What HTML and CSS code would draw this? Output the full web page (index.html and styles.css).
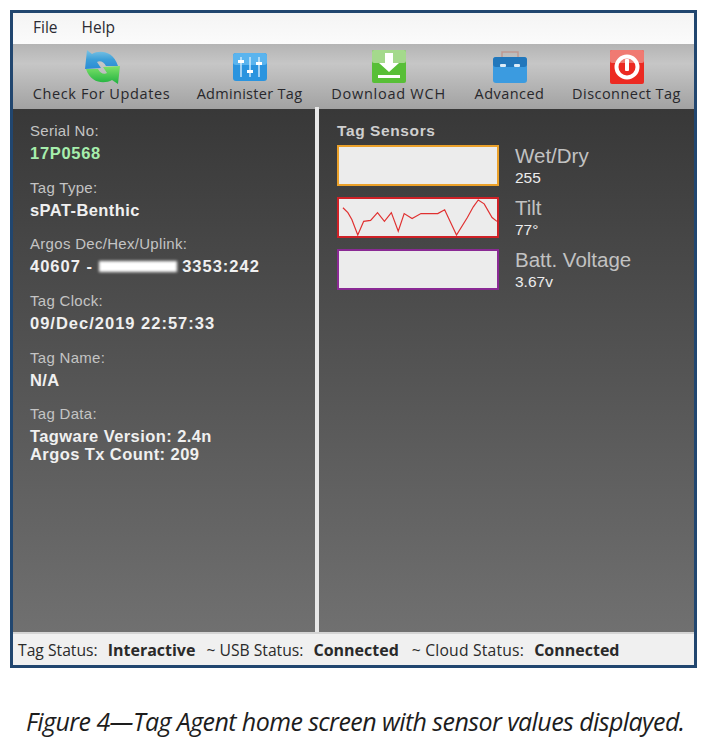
FILE: index.html
```html
<!DOCTYPE html>
<html lang="en">
<head>
<meta charset="utf-8">
<title>Tag Agent</title>
<link rel="stylesheet" href="styles.css">
</head>
<body>
<div class="window">
  <div class="menubar"><span>File</span><span>Help</span></div>
  <div class="toolbar">
    <div class="tool tool-updates">
      <svg class="icon" viewBox="0 0 36 36">
        <defs>
          <linearGradient id="syncblue" x1="0" y1="0" x2="0" y2="1"><stop offset="0" stop-color="#7cc4e4"/><stop offset="0.5" stop-color="#3d9fd8"/><stop offset="1" stop-color="#2a8bd6"/></linearGradient>
          <linearGradient id="syncgreen" x1="0" y1="0" x2="0" y2="1"><stop offset="0" stop-color="#7fe36a"/><stop offset="1" stop-color="#1fb13f"/></linearGradient>
        </defs>
        <path d="M3 1l5 4c7-4 21-4 26 12H22c-2-4-6-6-9-4l4 6-16 1z" fill="url(#syncblue)"/>
        <path d="M34 35l-6-4c-7 4-21 4-26-11h12c2 4 6 6 9 4l-4-6 17-1z" fill="url(#syncgreen)"/>
      </svg>
      <span>Check For Updates</span>
    </div>
    <div class="tool tool-admin">
      <svg class="icon" viewBox="0 0 36 36"><rect x="1" y="4" width="34" height="28" rx="3" fill="#2a94df"/><rect x="1" y="4" width="34" height="12" rx="3" fill="#5ab4ee"/><path d="M9 8v20M18 8v20M27 8v20" stroke="#d5ecfb" stroke-width="1.4"/><path d="M6 11h6v3H6zM15 21h6v3h-6zM24 13h6v3h-6z" fill="#fff"/></svg>
      <span>Administer Tag</span>
    </div>
    <div class="tool tool-download">
      <svg class="icon" viewBox="0 0 36 36"><rect x="1" y="1" width="34" height="33" rx="2" fill="#58bf37"/><rect x="1" y="1" width="34" height="13" rx="2" fill="#a4d98c"/><path d="M14 4h8v10h6L18 23 8 14h6z" fill="#fff"/><rect x="7" y="26" width="22" height="3" fill="#fff"/></svg>
      <span>Download WCH</span>
    </div>
    <div class="tool tool-advanced">
      <svg class="icon" viewBox="0 0 36 36"><path d="M10 8V3h16v5" fill="none" stroke="#c09a92" stroke-width="1.5"/><rect x="1" y="8" width="34" height="26" rx="3" fill="#3b9be0"/><rect x="1" y="8" width="34" height="10" rx="3" fill="#2277bb"/><rect x="8" y="15" width="6" height="3" rx="1" fill="#dcecf7"/><rect x="22" y="15" width="6" height="3" rx="1" fill="#dcecf7"/></svg>
      <span>Advanced</span>
    </div>
    <div class="tool tool-disconnect">
      <svg class="icon" viewBox="0 0 36 36"><rect x="1" y="1" width="34" height="34" rx="2" fill="#ec2a22"/><rect x="1" y="1" width="34" height="13" rx="2" fill="#f07a72"/><circle cx="18" cy="18" r="10.5" fill="none" stroke="#fff" stroke-width="4"/><rect x="16" y="10" width="4" height="12" rx="1" fill="#fff"/></svg>
      <span>Disconnect Tag</span>
    </div>
  </div>
  <div class="main">
    <div class="left">
      <div class="field"><div class="label">Serial No:</div><div class="value serial">17P0568</div></div>
      <div class="field"><div class="label">Tag Type:</div><div class="value">sPAT-Benthic</div></div>
      <div class="field"><div class="label">Argos Dec/Hex/Uplink:</div><div class="value numeric">40607 - <span class="redact"></span> 3353:242</div></div>
      <div class="field"><div class="label">Tag Clock:</div><div class="value numeric">09/Dec/2019 22:57:33</div></div>
      <div class="field"><div class="label">Tag Name:</div><div class="value">N/A</div></div>
      <div class="field"><div class="label">Tag Data:</div><div class="value tight">Tagware Version: 2.4n<br>Argos Tx Count: 209</div></div>
    </div>
    <div class="right">
      <div class="sensors-title">Tag Sensors</div>
      <div class="sensor">
        <div class="chart chart-orange"></div>
        <div class="reading"><div class="name">Wet/Dry</div><div class="num">255</div></div>
      </div>
      <div class="sensor">
        <div class="chart chart-red">
          <svg class="trace" viewBox="0 0 160 38" preserveAspectRatio="none"><polyline points="4,9 9,14 13,21 19,37 25,23 32,22 39,14 46,23 53,14 60,33 66,15 74,20 83,15 100,15 107,11 119,37 130,19 136,8 141,1 147,5 155,19 160,23" fill="none" stroke="#e03030" stroke-width="1.2"/></svg>
        </div>
        <div class="reading"><div class="name">Tilt</div><div class="num">77°</div></div>
      </div>
      <div class="sensor">
        <div class="chart chart-purple"></div>
        <div class="reading"><div class="name">Batt. Voltage</div><div class="num">3.67v</div></div>
      </div>
    </div>
  </div>
  <div class="statusbar">
    <span>Tag Status:</span><b>Interactive</b><span class="sep">~ USB Status:</span><b>Connected</b><span class="sep sep-cloud">~ Cloud Status:</span><b>Connected</b>
  </div>
</div>
<p class="caption">Figure 4—Tag Agent home screen with sensor values displayed.</p>
</body>
</html>
```
FILE: styles.css
```css
* { box-sizing: border-box; }
html, body { height: 100%; }
body {
  margin: 0;
  padding: 10px 6px 0 10px;
  background: #fff;
  font-family: "Liberation Sans", Arial, sans-serif;
  overflow: hidden;
}
.window {
  width: 687px;
  height: 658px;
  border: 3px solid #21466f;
  display: flex;
  flex-direction: column;
  background: #f0f0f0;
}
.menubar {
  height: 31px;
  flex: none;
  display: flex;
  gap: 24px;
  align-items: center;
  padding: 0 0 4px 20px;
  background: linear-gradient(#f4f4f4, #fbfbfb);
  font: 15.5px "Open Sans", sans-serif;
  color: #2b2b33;
}
.toolbar {
  height: 65px;
  flex: none;
  display: flex;
  background: linear-gradient(#b4b4b4, #c6c6c6 30%, #a2a2a2);
  font: 14.5px "Open Sans", sans-serif;
  letter-spacing: 0.3px;
  color: #28282c;
}
.tool {
  display: flex;
  flex-direction: column;
  align-items: center;
  padding-top: 5px;
  white-space: nowrap;
  line-height: 20px;
}
.icon { width: 36px; height: 36px; display: block; margin-bottom: -1px; }
.tool-updates { margin-left: 20px; width: 137px; letter-spacing: 0.63px; }
.tool-admin { margin-left: 27px; width: 105px; }
.tool-download { margin-left: 28px; width: 117px; letter-spacing: 0.75px; }
.tool-advanced { margin-left: 27px; width: 71px; letter-spacing: 0.45px; }
.tool-disconnect { margin-left: 27px; width: 109px; letter-spacing: 0.45px; }
.main {
  flex: 1;
  display: flex;
  min-height: 0;
  position: relative;
  background: #e8e8e8;
}
.main::before {
  content: "";
  position: absolute;
  left: 302px;
  top: -2px;
  width: 4px;
  height: 2px;
  background: #e8e8e8;
}
.left, .right {
  background: linear-gradient(#383838, #707070);
  color: #e6e6e6;
}
.left {
  width: 302px;
  padding: 12px 0 0 17px;
}
.right {
  flex: 1;
  margin-left: 4px;
  padding: 12px 0 0 18px;
}
.field { margin-bottom: 12.7px; }
.label {
  font-size: 15px;
  letter-spacing: 0.3px;
  line-height: 20px;
  color: #c4c4c4;
}
.value {
  font-size: 16.5px;
  font-weight: bold;
  letter-spacing: 0.42px;
  line-height: 24px;
  color: #f0f0f0;
  white-space: nowrap;
}
.value.numeric { letter-spacing: 1px; }
.value.tight { line-height: 18px; padding-top: 3px; }
.serial { color: #a6eeac; letter-spacing: 0.7px; }
.redact {
  display: inline-block;
  width: 78px;
  height: 11px;
  vertical-align: 0;
  background: #fff;
  filter: blur(1.5px);
}
.sensors-title {
  font-size: 15.5px;
  font-weight: bold;
  letter-spacing: 0.6px;
  line-height: 20px;
  color: #cfcfcf;
  margin-bottom: 4px;
}
.sensor {
  display: flex;
  gap: 16px;
  margin-bottom: 11px;
}
.chart {
  width: 162px;
  height: 41px;
  background: #ececec;
  border: 2px solid #000;
}
.chart-orange { border-color: #eba12a; }
.chart-red { border-color: #cf2127; }
.chart-purple { border-color: #8a2a94; }
.trace { width: 100%; height: 100%; display: block; }
.reading { margin-top: -2px; height: 43px; margin-bottom: -2px; }
.name {
  font-size: 20.5px;
  line-height: 25px;
  color: #c2c2c2;
}
.num {
  font-size: 15.5px;
  line-height: 20px;
  color: #ececec;
}
.statusbar {
  height: 33px;
  flex: none;
  display: flex;
  align-items: center;
  padding-left: 5px;
  border-top: 2px solid #d4d4d4;
  background: #f0f0f0;
  font: 15.7px "Open Sans", sans-serif;
  color: #2a2a2a;
  white-space: nowrap;
}
.statusbar b { margin-left: 10px; font-size: 16px; }
.statusbar .sep { margin-left: 11px; }
.statusbar .sep-cloud { margin-left: 13px; letter-spacing: 0.2px; }
.caption {
  margin: 38px 0 0 16px;
  font: italic 25px "Open Sans", sans-serif;
  letter-spacing: -0.58px;
  color: #1d1d1d;
  white-space: nowrap;
  line-height: 30px;
}
```
